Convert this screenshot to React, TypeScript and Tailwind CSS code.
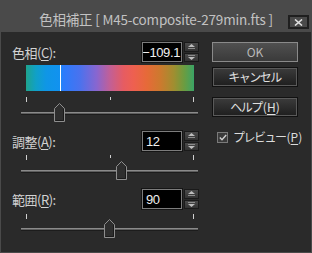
import React from 'react';

const FONT = "font-['Noto_Sans_CJK_JP','Noto_Sans',sans-serif]";
const NUM = "font-['Liberation_Sans','Noto_Sans',sans-serif]";

function Spinner() {
  return (
    <div className="flex flex-col gap-[1px] w-[15px] h-[20px]">
      <div className="flex-1 flex items-center justify-center bg-gradient-to-b from-[#4a4a4a] to-[#333] border border-[#1a1a1a]">
        <svg width="7" height="5" viewBox="0 0 7 5">
          <polygon points="3.5,0 7,3 0,3" fill="#bdbdbd" />
          <rect x="0" y="4" width="7" height="1" fill="#8a8a8a" />
        </svg>
      </div>
      <div className="flex-1 flex items-center justify-center bg-gradient-to-b from-[#4a4a4a] to-[#333] border border-[#1a1a1a]">
        <svg width="7" height="5" viewBox="0 0 7 5">
          <rect x="0" y="0" width="7" height="1" fill="#8a8a8a" />
          <polygon points="0,2 7,2 3.5,5" fill="#bdbdbd" />
        </svg>
      </div>
    </div>
  );
}

function Field({ label, hot, value, align = 'right' }: { label: string; hot: string; value: string; align?: 'left' | 'right' }) {
  return (
    <div className="flex items-center justify-between w-[187px] h-[20px]">
      <span className="text-[13px] text-[#d2d2d2] leading-none tracking-[-0.5px]">
        {label}(<span className="underline underline-offset-2">{hot}</span>):
      </span>
      <div className="flex items-center gap-[2px]">
        <div
          className={`w-[40px] h-[20px] bg-black border border-[#7c7c7c] shadow-[0_0_0_1px_#151515] flex items-center px-[1px] text-[13px] text-[#f0f0f0] leading-none whitespace-nowrap overflow-hidden tracking-[-0.4px] ${NUM} ${
            align === 'right' ? 'justify-end' : 'justify-start pl-[3px]'
          }`}
        >
          {value}
        </div>
        <Spinner />
      </div>
    </div>
  );
}

function Ticks({ count }: { count: number }) {
  return (
    <div className="ml-[14px] w-[168px] h-[5px] flex justify-between">
      {Array.from({ length: count }).map((_, i) => (
        <div key={i} className={`w-[1px] bg-[#cfcfcf] ${i > 0 && i < count - 1 ? 'h-[3px]' : 'h-[5px]'}`} />
      ))}
    </div>
  );
}

function Slider({ pos }: { pos: number }) {
  return (
    <div className="relative ml-[9px] w-[177px] h-[19px]">
      <div className="absolute left-0 right-0 top-[9px] h-[3px] bg-[#5e5e5e] border-t border-[#8a8a8a] border-b border-b-[#1c1c1c]" />
      <svg className="absolute top-0" style={{ left: pos }} width="11" height="19" viewBox="0 0 11 19">
        <polygon points="0.5,5.5 5.5,0.5 10.5,5.5 10.5,18.5 0.5,18.5" fill="#2e2e2e" stroke="#8e8e8e" />
        <polyline points="1.5,17.5 9.5,17.5 9.5,6" fill="none" stroke="#1a1a1a" />
      </svg>
    </div>
  );
}

function Button({ children, primary }: { children: React.ReactNode; primary?: boolean }) {
  return (
    <div
      className={`w-[86px] h-[20px] flex items-center justify-center text-[12px] leading-none border ${
        primary
          ? 'border-[#8a8a8a] bg-gradient-to-b from-[#505050] to-[#3a3a3a] text-[#b8b8b8]'
          : 'border-[#111] shadow-[inset_0_0_0_1px_#5a5a5a] bg-gradient-to-b from-[#3c3c3c] to-[#1e1e1e] text-[#e0e0e0]'
      }`}
    >
      {children}
    </div>
  );
}

function Kana({ children }: { children: React.ReactNode }) {
  return <span className="tracking-[-1.5px] mr-[1px]">{children}</span>;
}

export default function App() {
  return (
    <div className={`w-[312px] h-[253px] bg-[#4a4a4a] flex flex-col ${FONT}`}>
      {/* title bar */}
      <div className="relative h-[32px] flex items-start justify-center pt-[9px]">
        <span className="text-[13.5px] leading-[20px] text-[#c2c2c2] tracking-[-0.2px]">色相補正 [ M45-composite-279min.fts ]</span>
        <div className="absolute right-[3px] top-[15px] w-[21px] h-[14px] border-2 border-[#1f1f1f] bg-[#4a4a4a] flex items-center justify-center">
          <svg width="9" height="7" viewBox="0 0 9 7">
            <path d="M1 0.5 L8 6.5 M8 0.5 L1 6.5" stroke="#e0e0e0" strokeWidth="1.6" />
          </svg>
        </div>
      </div>

      {/* body */}
      <div className="flex-1 mx-[1px] mb-[1px] bg-[#2a2a2a] flex pl-[11px]">
        <div className="flex flex-col w-[187px]">
          <div className="mt-[10px]">
            <Field label="色相" hot="C" value="−109.1" />
          </div>
          <div
            className="relative mt-[3px] ml-[14px] w-[168px] h-[26px]"
            style={{
              background:
                'linear-gradient(to right, #1fa48c 0%, #10a0c8 6%, #0f96e6 12%, #1192f0 20%, #2a7cfc 22%, #4a72ee 32%, #8866d0 42%, #c25f96 50%, #e65c62 58%, #ee6050 64%, #e66a38 72%, #cc7a2e 80%, #a08e30 88%, #6c9c40 94%, #3aa466 100%)',
            }}
          >
            <div className="absolute top-0 bottom-0 left-[34px] w-[1px] bg-white" />
          </div>
          <div className="mt-[6px]">
            <Ticks count={3} />
          </div>
          <div className="mt-[1px]">
            <Slider pos={33} />
          </div>

          <div className="mt-[9px]">
            <Field label="調整" hot="A" value="12" align="left" />
          </div>
          <div className="mt-[4px]">
            <Ticks count={3} />
          </div>
          <div className="mt-[1px]">
            <Slider pos={95} />
          </div>

          <div className="mt-[9px]">
            <Field label="範囲" hot="R" value="90" align="left" />
          </div>
          <div className="mt-[5px]">
            <Ticks count={2} />
          </div>
          <Slider pos={83} />
        </div>

        <div className="ml-[13px] flex flex-col">
          <div className="mt-[10px]">
            <Button primary>OK</Button>
          </div>
          <div className="mt-[5px]">
            <Button>
              <Kana>キャンセル</Kana>
            </Button>
          </div>
          <div className="mt-[10px]">
            <Button>
              <Kana>ヘルプ</Kana>(<span className="underline underline-offset-2">H</span>)
            </Button>
          </div>
          <div className="mt-[14px] ml-[5px] flex items-center gap-[5px]">
            <div className="w-[11px] h-[11px] border border-[#7a7a7a] bg-[#3a3a3a] flex items-center justify-center">
              <svg width="8" height="7" viewBox="0 0 8 7">
                <path d="M0.8 3.5 L3 5.8 L7.2 1" stroke="#cfcfcf" strokeWidth="1.4" fill="none" />
              </svg>
            </div>
            <span className="text-[12px] leading-none text-[#dcdcdc]">
              <Kana>プレビュー</Kana>(<span className="underline underline-offset-2">P</span>)
            </span>
          </div>
        </div>
      </div>
    </div>
  );
}
